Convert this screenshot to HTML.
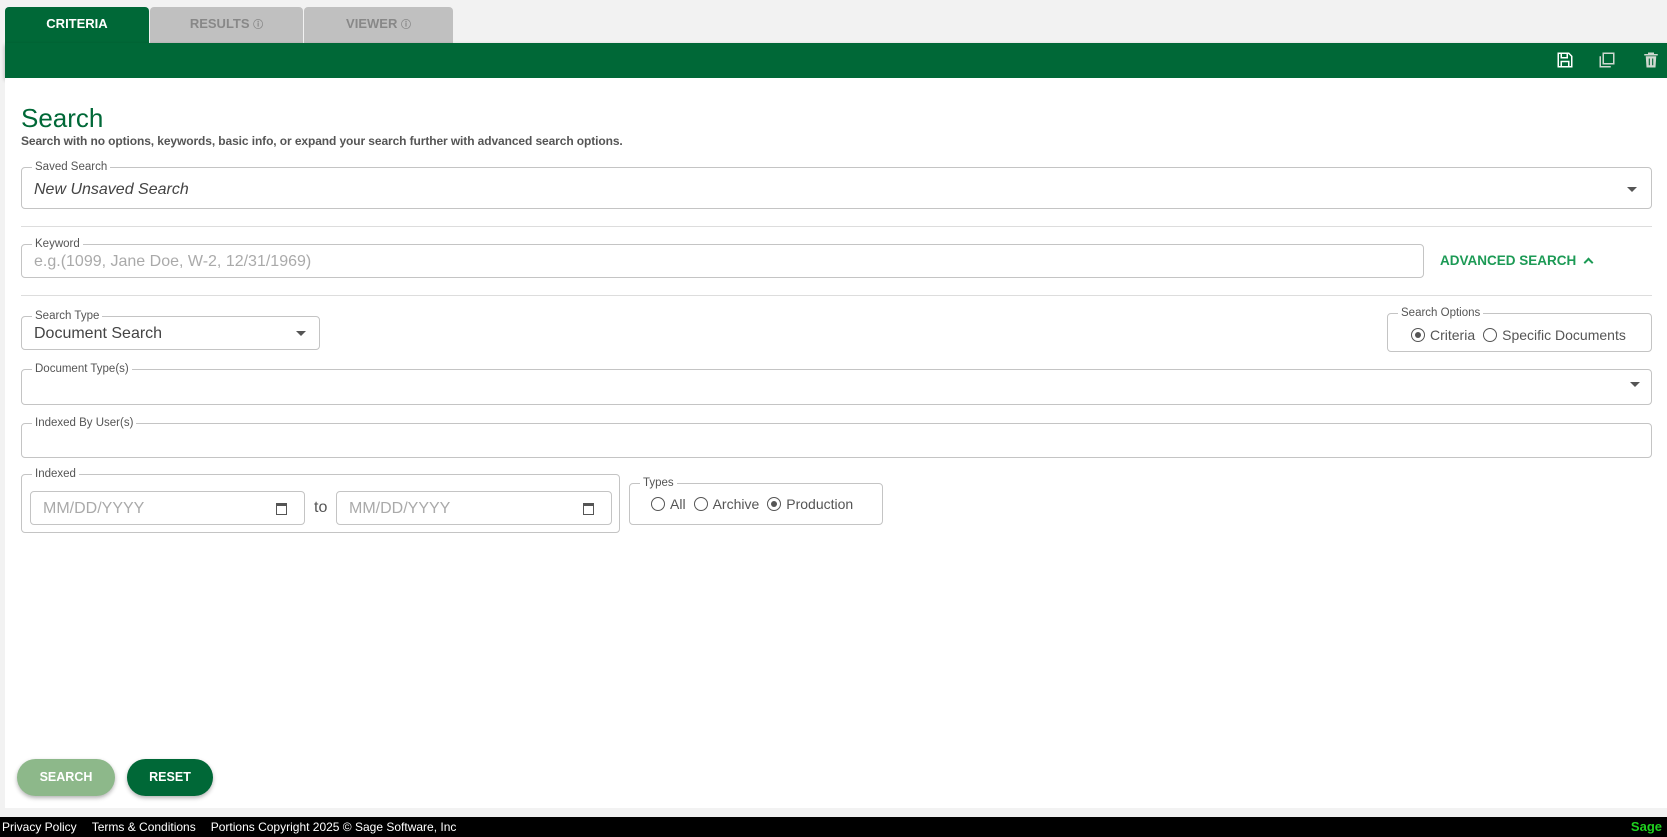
<!DOCTYPE html>
<html><head><meta charset="utf-8"><style>
*{box-sizing:border-box}
body{margin:0;width:1667px;height:837px;overflow:hidden;background:#f2f2f2;font-family:"Liberation Sans",sans-serif;position:relative;color:#333}
.abs{position:absolute}
.tab{position:absolute;top:7px;height:36px;border-radius:4px 4px 0 0;font-size:13px;font-weight:bold;text-align:center;line-height:34px;color:#888;background:#c0c0c0}
.bar{position:absolute;left:5px;top:43px;width:1662px;height:35px;background:#006837;box-shadow:0 2px 4px rgba(0,0,0,.3)}
.card{position:absolute;left:5px;top:78px;width:1662px;height:730px;background:#fff}
fieldset{position:absolute;margin:0;border:1px solid #c4c4c4;border-radius:4px;padding:0 12px}
legend{font-size:11.5px;color:#555;padding:0 3px;margin-left:-2px;line-height:10px}
.val{font-size:16px;color:#444}
.ph{font-size:16px;color:#aaa}
.caret{position:absolute;width:0;height:0;border-left:5px solid transparent;border-right:5px solid transparent;border-top:5px solid #555}
.hr{position:absolute;left:21px;width:1631px;height:1px;background:#ddd}
.radio{display:inline-block;width:14px;height:14px;border:1.5px solid #555;border-radius:50%;vertical-align:-2px;margin-right:5px;position:relative}
.radio.on::after{content:"";position:absolute;left:2.5px;top:2.5px;width:6px;height:6px;border-radius:50%;background:#555}
.opt{font-size:14px;color:#555;margin-right:8px}
.btn{position:absolute;border-radius:19px;color:#fff;font-size:12.5px;font-weight:bold;text-align:center;line-height:37px;box-shadow:0 2px 4px rgba(0,0,0,.3)}
.foot{position:absolute;left:0;top:817px;width:1667px;height:20px;background:#000;color:#fff;font-size:12px;line-height:20px}
</style></head><body>
<div class="tab" style="left:5px;width:144px;background:#006837;color:#fff">CRITERIA</div>
<div class="tab" style="left:150px;width:153px">RESULTS <span style="font-size:10px">ⓘ</span></div>
<div class="tab" style="left:304px;width:149px">VIEWER <span style="font-size:10px">ⓘ</span></div>
<div class="bar">
<svg class="abs" style="left:1551px;top:8px" width="18" height="18" viewBox="0 0 24 24" fill="none" stroke="#fff" stroke-width="2"><path d="M4 3h13l4 4v14H3V3z"/><rect x="7" y="3" width="8" height="6"/><rect x="7" y="14" width="10" height="7"/></svg>
<svg class="abs" style="left:1593px;top:8px" width="18" height="18" viewBox="0 0 24 24" fill="none" stroke="#cfd8d0" stroke-width="2"><rect x="7" y="3" width="14" height="14"/><path d="M3 7v14h14"/></svg>
<svg class="abs" style="left:1637px;top:8px" width="18" height="18" viewBox="0 0 24 24" fill="#cfd8d0"><path d="M8 2h8v2h5v2H3V4h5zM5 7h14l-1 15H6zM9 10v9h1.5v-9zM13.5 10v9H15v-9z"/></svg>
</div>
<div class="card"></div>
<div class="abs" style="left:21px;top:103px;font-size:26px;color:#006837">Search</div>
<div class="abs" style="left:21px;top:134px;font-size:12px;font-weight:bold;color:#555;letter-spacing:-0.1px">Search with no options, keywords, basic info, or expand your search further with advanced search options.</div>

<fieldset style="left:21px;top:162px;width:1631px;height:47px"><legend>Saved Search</legend><div class="val" style="font-style:italic;margin-top:9px">New Unsaved Search</div></fieldset>
<div class="caret" style="left:1627px;top:187px"></div>
<div class="hr" style="top:226px"></div>

<fieldset style="left:21px;top:239px;width:1403px;height:39px"><legend>Keyword</legend><div class="ph" style="margin-top:4px">e.g.(1099, Jane Doe, W-2, 12/31/1969)</div></fieldset>
<div class="abs" style="left:1440px;top:253px;font-size:13.5px;font-weight:bold;color:#1c9a55">ADVANCED SEARCH <span style="display:inline-block;width:7px;height:7px;border-left:2.5px solid #1c9a55;border-top:2.5px solid #1c9a55;transform:rotate(45deg);margin-left:5px;vertical-align:-1px"></span></div>
<div class="hr" style="top:295px"></div>

<fieldset style="left:21px;top:311px;width:299px;height:39px"><legend>Search Type</legend><div class="val" style="margin-top:4px">Document Search</div></fieldset>
<div class="caret" style="left:296px;top:331px"></div>

<fieldset style="left:1387px;top:308px;width:265px;height:44px"><legend>Search Options</legend><div style="margin-top:9px;padding-left:11px"><span class="radio on"></span><span class="opt">Criteria</span><span class="radio"></span><span class="opt">Specific Documents</span></div></fieldset>

<fieldset style="left:21px;top:364px;width:1631px;height:41px"><legend>Document Type(s)</legend></fieldset>
<div class="caret" style="left:1630px;top:382px"></div>

<fieldset style="left:21px;top:418px;width:1631px;height:40px"><legend>Indexed By User(s)</legend></fieldset>

<fieldset style="left:21px;top:469px;width:599px;height:64px;padding:0 8px"><legend style="margin-left:2px">Indexed</legend></fieldset>
<div class="abs" style="left:30px;top:491px;width:275px;height:34px;border:1px solid #c4c4c4;border-radius:4px"><span class="ph abs" style="left:12px;top:8px">MM/DD/YYYY</span><span class="abs" style="left:245px;top:11px;width:11px;height:12px;border:1.5px solid #555;border-top-width:3px"></span></div>
<div class="abs" style="left:314px;top:499px;font-size:16px;color:#555">to</div>
<div class="abs" style="left:336px;top:491px;width:276px;height:34px;border:1px solid #c4c4c4;border-radius:4px"><span class="ph abs" style="left:12px;top:8px">MM/DD/YYYY</span><span class="abs" style="left:246px;top:11px;width:11px;height:12px;border:1.5px solid #555;border-top-width:3px"></span></div>

<fieldset style="left:629px;top:478px;width:254px;height:47px"><legend>Types</legend><div style="margin-top:8px;padding-left:9px"><span class="radio"></span><span class="opt">All</span><span class="radio"></span><span class="opt">Archive</span><span class="radio on"></span><span class="opt">Production</span></div></fieldset>

<div class="btn" style="left:17px;top:759px;width:98px;background:#8db88a">SEARCH</div>
<div class="btn" style="left:127px;top:759px;width:86px;background:#006837">RESET</div>

<div class="foot"><span style="margin-left:2px">Privacy Policy</span><span style="margin-left:15px">Terms &amp; Conditions</span><span style="margin-left:15px">Portions Copyright 2025 © Sage Software, Inc</span><span style="position:absolute;right:5px;color:#1fd11f;font-weight:bold;font-size:13px">Sage</span></div>
</body></html>
